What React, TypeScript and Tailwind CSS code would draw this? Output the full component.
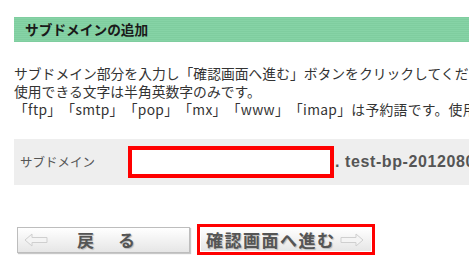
import React from "react";

const jp = "font-['MS_PGothic','Noto_Sans_CJK_JP',sans-serif] [text-spacing-trim:space-all]";

function ArrowLeft() {
  return (
    <svg width="24" height="14" viewBox="0 0 24 14">
      <path
        d="M1 7 L8 1 L8 4.5 L23 4.5 L23 9.5 L8 9.5 L8 13 Z"
        fill="#f4f4f4"
        stroke="#cfcfcf"
        strokeWidth="1"
      />
    </svg>
  );
}

function ArrowRight() {
  return (
    <svg width="24" height="14" viewBox="0 0 24 14">
      <path
        d="M23 7 L16 1 L16 4.5 L1 4.5 L1 9.5 L16 9.5 L16 13 Z"
        fill="#f4f4f4"
        stroke="#cfcfcf"
        strokeWidth="1"
      />
    </svg>
  );
}

export default function App() {
  return (
    <div className={"w-[469px] h-[280px] overflow-hidden bg-white " + jp}>
      <div className="pt-[17px] pl-[14px]">
        {/* section header */}
        <div className="h-[25px] bg-[repeating-linear-gradient(180deg,#7fcd9f_0px,#7fcd9f_1px,#86d3a6_1px,#86d3a6_2px)] flex items-center pl-[11px]">
          <span className="text-[13.7px] font-bold text-[#1a1a1a] whitespace-nowrap">
            サブドメインの追加
          </span>
        </div>

        {/* description */}
        <div className="mt-[22px] text-[13.8px] leading-[18px] text-[#333] whitespace-nowrap">
          <p>サブドメイン部分を入力し「確認画面へ進む」ボタンをクリックしてください。</p>
          <p>使用できる文字は半角英数字のみです。</p>
          <p className="tracking-[0.3px]">
            「ftp」「smtp」「pop」「mx」「www」「imap」は予約語です。使用できません。
          </p>
        </div>

        {/* input row */}
        <div className="mt-[21px] h-[46px] bg-[#eeeeee] flex items-center whitespace-nowrap">
          <span className="shrink-0 pl-[6px] w-[114px] text-[12.5px] text-[#555]">
            サブドメイン
          </span>
          <div className="shrink-0 w-[206px] h-[32px] border-[4px] border-[#ff0000] bg-white" />
          <span className="shrink-0 ml-[1px] font-['Liberation_Sans',Arial,sans-serif] font-bold text-[16px] tracking-[0.6px] text-[#555]">
            . test-bp-20120801
          </span>
        </div>

        {/* buttons */}
        <div className="mt-[39px] flex items-center">
          <button className="shrink-0 ml-[3px] w-[173px] h-[26px] border border-[#bdbdbd] bg-[linear-gradient(180deg,#ffffff,#e6e6e6)] shadow-[1px_1px_1px_#c8c8c8] flex items-center pl-[6px]">
            <ArrowLeft />
            <span className="ml-[29px] text-[17px] font-bold text-[#555] [text-shadow:1px_1px_1px_#bbb] tracking-[24px]">
              戻る
            </span>
          </button>
          <div className="shrink-0 ml-[7px] w-[178px] h-[31px] border-[3px] border-[#ff0000] bg-white p-[1px]">
            <div className="h-full bg-[linear-gradient(180deg,#ffffff,#e6e6e6)] flex items-center pl-[5px]">
              <span className="text-[17px] font-bold text-[#555] [text-shadow:1px_1px_1px_#bbb] tracking-[1.5px]">
                確認画面へ進む
              </span>
              <span className="ml-[4px]">
                <ArrowRight />
              </span>
            </div>
          </div>
        </div>
      </div>
    </div>
  );
}
